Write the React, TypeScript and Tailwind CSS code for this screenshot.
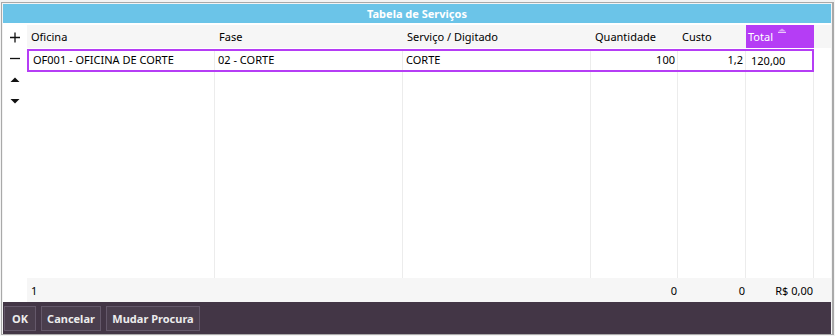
import React from 'react';

const cols = [
  { key: 'oficina', label: 'Oficina', w: 'w-[188px]' },
  { key: 'fase', label: 'Fase', w: 'w-[188px]' },
  { key: 'servico', label: 'Serviço / Digitado', w: 'w-[188px]' },
  { key: 'qtd', label: 'Quantidade', w: 'w-[87px]' },
  { key: 'custo', label: 'Custo', w: 'w-[68px]' },
  { key: 'total', label: 'Total', w: 'w-[68px]' },
];

function GutterIcons() {
  return (
    <div className="w-[24px] flex flex-col items-center pt-[4px] text-black">
      {/* plus */}
      <svg width="12" height="21" viewBox="0 0 12 21">
        <path d="M6 5.5v10M1 10.5h10" stroke="#111" strokeWidth="1.3" />
      </svg>
      {/* minus */}
      <svg width="12" height="21" viewBox="0 0 12 21">
        <path d="M1 10.5h10" stroke="#111" strokeWidth="1.3" />
      </svg>
      {/* up */}
      <svg width="12" height="21" viewBox="0 0 12 21">
        <path d="M1.5 13h9L6 8.5z" fill="#111" />
      </svg>
      {/* down */}
      <svg width="12" height="21" viewBox="0 0 12 21">
        <path d="M1.5 9h9L6 13.5z" fill="#111" />
      </svg>
    </div>
  );
}

export default function App() {
  return (
    <div
      className="w-[835px] h-[336px] bg-[#f3f3f3] pl-[1px] pt-[2px] pr-[1px] pb-[1px]"
      style={{ fontFamily: '"Noto Sans", "Open Sans", sans-serif' }}
    >
      <div className="h-full border-l border-t border-r-[2px] border-b border-[#a9a9a9] pl-[1px] pt-[1px] pr-[1px] bg-[#f3f3f3] flex flex-col">
        {/* Title */}
        <div className="h-[19px] bg-[#6bc4e8] flex items-center justify-center text-white text-[11px] font-bold leading-none">
          Tabela de Serviços
        </div>

        {/* Table area */}
        <div className="flex-1 bg-white flex min-h-0">
          <GutterIcons />
          <div className="flex-1 flex flex-col min-w-0">
            {/* Header */}
            <div className="mt-[2px] h-[23px] bg-[#f6f6f6] flex text-[11px] text-black leading-none">
              {cols.map((c) =>
                c.key === 'total' ? (
                  <div key={c.key} className={`${c.w} relative bg-[#b53df5] text-white flex items-center pl-[2px]`}>
                    {c.label}
                    <svg className="absolute left-[32px] top-[3px]" width="8" height="5" viewBox="0 0 8 5">
                      <path d="M0 3.5L4 0.5L8 3.5z" fill="#d9a2f7" />
                      <path d="M0 4.5h8" stroke="#e9c8fb" strokeWidth="1" />
                    </svg>
                  </div>
                ) : (
                  <div key={c.key} className={`${c.w} flex items-center pl-[4px]`}>
                    {c.label}
                  </div>
                )
              )}
              <div className="flex-1" />
            </div>

            {/* Selected row */}
            <div className="mt-[1px] flex">
              <div className="w-[787px] h-[23px] border-[2px] border-[#b53df5] flex text-[11px] text-black leading-none">
                <div className="w-[186px] border-r border-[#ececec] flex items-center pl-[4px] pb-[2px]">OF001 - OFICINA DE CORTE</div>
                <div className="w-[188px] border-r border-[#ececec] flex items-center pl-[3px] pb-[2px]">02 - CORTE</div>
                <div className="w-[188px] border-r border-[#ececec] flex items-center pl-[3px] pb-[2px]">CORTE</div>
                <div className="w-[87px] border-r border-[#ececec] flex items-center justify-end pr-[2px] pb-[2px]">100</div>
                <div className="w-[68px] border-r border-[#ececec] flex items-center justify-end pr-[2px] pb-[2px]">1,2</div>
                <div className="flex-1 flex items-center pl-[5px]">120,00</div>
              </div>
            </div>

            {/* Empty body */}
            <div className="flex-1 flex">
              {cols.map((c) => (
                <div key={c.key} className={`${c.w} border-r border-[#ececec]`} />
              ))}
            </div>

            {/* Footer totals */}
            <div className="h-[24px] bg-[#f6f6f6] flex text-[11px] text-black leading-none">
              <div className="w-[188px] flex items-center pl-[4px]">1</div>
              <div className="w-[188px]" />
              <div className="w-[188px]" />
              <div className="w-[87px] flex items-center justify-end pr-[1px]">0</div>
              <div className="w-[68px] flex items-center justify-end pr-[1px]">0</div>
              <div className="w-[68px] flex items-center justify-end pr-[1px]">R$ 0,00</div>
              <div className="flex-1" />
            </div>
          </div>
        </div>

        {/* Button bar */}
        <div className="h-[32px] bg-[#433646] flex items-center gap-[5px] pl-[1px] text-[11px] font-bold text-[#ececec] leading-none">
          <button className="h-[25px] w-[32px] bg-[#4a3e4d] border border-[#64586a]">OK</button>
          <button className="h-[25px] w-[60px] bg-[#4a3e4d] border border-[#64586a]">Cancelar</button>
          <button className="h-[25px] w-[94px] bg-[#4a3e4d] border border-[#64586a]">Mudar Procura</button>
        </div>
      </div>
    </div>
  );
}
